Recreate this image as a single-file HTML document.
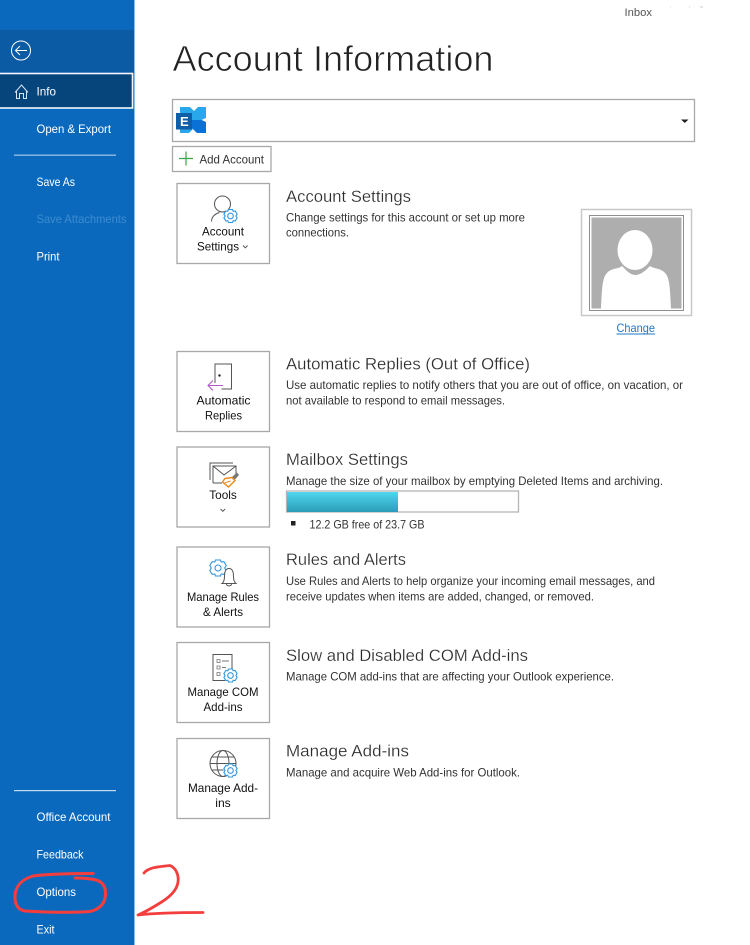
<!DOCTYPE html>
<html><head><meta charset="utf-8"><title>Account Information</title>
<style>
html,body{margin:0;padding:0;background:#fff;width:750px;height:945px;overflow:hidden}
svg{display:block;filter:blur(.35px)}
text{font-family:"Liberation Sans",sans-serif;fill:#333;font-size:12px}
.n text{fill:#fff;font-size:12px}
.h{font-size:17px;fill:#2b2b2b;stroke:#fff;stroke-width:.22px}
.b{fill:#111;font-size:12px;text-anchor:middle}
.box{fill:#fff;stroke:#a8a8a8;stroke-width:1.3}
.ic{fill:none;stroke:#555;stroke-width:1}
.g{fill:none;stroke:#2f97dc;stroke-width:1.1}
</style></head><body>
<svg width="750" height="945" viewBox="0 0 750 945" xmlns="http://www.w3.org/2000/svg">
<defs><linearGradient id="bar" x1="0" y1="0" x2="0" y2="1"><stop offset="0" stop-color="#4fd6ee"/><stop offset="1" stop-color="#2b9cb8"/></linearGradient></defs>
<!-- sidebar -->
<rect width="134" height="945" fill="#0b69bd"/>
<rect x="134" width="1" height="945" fill="#8fbce4"/>
<rect y="30" width="134" height="43" fill="#0a5aa4"/>
<circle cx="21" cy="50.500" r="9.500" fill="none" stroke="#fff" stroke-width="1"/>
<path d="M27 50.500H15.500M20 46l-4.500 4.500L20 55" fill="none" stroke="#fff" stroke-width="1"/>
<rect x="-2" y="73.500" width="134.500" height="34.500" fill="#05457c" stroke="#f4f8fc" stroke-width="1.600"/>
<path d="M15 92.500L21.500 85L28 92.500M16.500 91V98.500H19.500V93.500H23.500V98.500H26.500V91" fill="none" stroke="#d8e6f2" stroke-width="1"/>
<rect x="14" y="154.500" width="102" height="1.400" fill="#8fbce4"/>
<rect x="14" y="790" width="102" height="1.200" fill="#c4dcf1"/>
<g class="n">
<text x="36.500" y="95.500" textLength="19.500" lengthAdjust="spacingAndGlyphs">Info</text>
<text x="36.500" y="133" textLength="74.500" lengthAdjust="spacingAndGlyphs">Open &amp; Export</text>
<text x="36.500" y="186" textLength="38.500" lengthAdjust="spacingAndGlyphs">Save As</text>
<text x="36.500" y="223" textLength="90" lengthAdjust="spacingAndGlyphs" style="fill:#3d8ccf">Save Attachments</text>
<text x="36.500" y="260.500" textLength="23" lengthAdjust="spacingAndGlyphs">Print</text>
<text x="36.500" y="821" textLength="74" lengthAdjust="spacingAndGlyphs">Office Account</text>
<text x="36.500" y="858.500" textLength="47" lengthAdjust="spacingAndGlyphs">Feedback</text>
<text x="36.500" y="896" textLength="39.500" lengthAdjust="spacingAndGlyphs">Options</text>
<text x="36.500" y="933.500" textLength="18" lengthAdjust="spacingAndGlyphs">Exit</text>
</g>
<!-- red annotation -->
<path d="M93 873.500C70 873.500 48 874 33 876C20 880 15 888 15 897C15 906 19 910 25 911C50 912.500 75 912.500 90 911.500C100 909 105 903 105.500 895C106 887 103 882 96 880C90 878.500 82 878 75 878" fill="none" stroke="#f43d3d" stroke-width="3" stroke-linecap="round" stroke-linejoin="round"/>
<path d="M144 873C148 868 155 867 170 865.500C176 868 179 875 178 882C177 890 170 897 160 903C152 908 145 912 138 915C155 913 185 912.500 203 912.500" fill="none" stroke="#f43d3d" stroke-width="2.800" stroke-linecap="round" stroke-linejoin="round"/>
<!-- top -->
<text x="624.500" y="16" textLength="27.500" lengthAdjust="spacingAndGlyphs" style="font-size:11px;fill:#555">Inbox</text>
<rect x="670" y="6.500" width="1" height="1" fill="#ddd"/><rect x="689" y="6.500" width="1" height="1" fill="#ccc"/><rect x="700" y="6.500" width="3" height="1" fill="#ccc"/>
<text x="172.500" y="71" textLength="321" lengthAdjust="spacingAndGlyphs" style="font-size:36px;fill:#222;stroke:#fff;stroke-width:.75px">Account Information</text>
<!-- account select -->
<rect x="172.500" y="99.500" width="522" height="42" class="box"/>
<path d="M681 119.500h7.500l-3.750 3.500z" fill="#222"/>
<path d="M180 107H190L194 111L198 107H206V118L201.500 120L206 122V133H197L193 129L189 133H180Z" fill="#28a8ea"/>
<path d="M192 120H201.500L206 122V133H197L192 128Z" fill="#0a72d6"/>
<rect x="176" y="113" width="16" height="16.500" fill="#0f5ea8"/>
<text x="180" y="126" style="font-size:13px;font-weight:bold;fill:#fff">E</text>
<!-- add account -->
<rect x="172.500" y="146.500" width="98.500" height="25" class="box"/>
<path d="M186 151.500v14M179 158.500h14" stroke="#34a84a" stroke-width="1.200" fill="none"/>
<text x="199.500" y="163.500" textLength="64.500" lengthAdjust="spacingAndGlyphs" style="font-size:12px">Add Account</text>
<!-- Buttons -->
<rect x="177" y="183.500" width="92.500" height="80" class="box"/>
<rect x="177" y="351.500" width="92.500" height="80" class="box"/>
<rect x="177" y="447" width="92.500" height="80" class="box"/>
<rect x="177" y="547" width="92.500" height="80" class="box"/>
<rect x="177" y="642.500" width="92.500" height="80" class="box"/>
<rect x="177" y="738.500" width="92.500" height="80" class="box"/>
<!-- account settings icon -->
<circle cx="222.500" cy="204" r="8" class="ic"/>
<path d="M211.500 221.500c0-5 4-8 8-9" class="ic"/>
<g id="gear1"><circle cx="230.500" cy="216" r="7" fill="#fff"/><circle cx="230.500" cy="216" r="2.800" class="g"/><path d="M228.500 209.500h4l.7 1.800 2-.3 1.900 3.200-1.200 1.800 1.200 1.800-1.900 3.200-2-.3-.7 1.800h-4l-.7-1.800-2 .3-1.900-3.200 1.200-1.800-1.200-1.800 1.900-3.200 2 .3z" class="g"/></g>
<text class="b" x="223" y="235.500" textLength="42" lengthAdjust="spacingAndGlyphs">Account</text>
<text class="b" x="218" y="250.500" textLength="42" lengthAdjust="spacingAndGlyphs">Settings</text>
<path d="M243 245.500l2.300 2.300 2.300-2.300" class="ic"/>
<!-- auto replies icon -->
<path d="M215 383v-19h16.500v25h-10" class="ic"/>
<circle cx="219.500" cy="375.500" r="1.200" fill="#222"/>
<path d="M223 385.500h-15M213 380.500l-5 5 5 5" fill="none" stroke="#b15cc6" stroke-width="1.100"/>
<text class="b" x="223.500" y="404.500" textLength="54" lengthAdjust="spacingAndGlyphs">Automatic</text>
<text class="b" x="223.500" y="419.500" textLength="37" lengthAdjust="spacingAndGlyphs">Replies</text>
<!-- tools icon -->
<path d="M210 480v-17h23" class="ic"/>
<path d="M213 483v-17h23v9M213 483h9M213 466l11 9 12-9" class="ic"/>
<path d="M232 477l5-4.500 2 2.500-4 4.500z" fill="#777"/>
<path d="M225 478.500l7-1 3 3-6.500 6.500-6-5z" fill="#fff" stroke="#ec8a1e" stroke-width="1.400"/>
<path d="M224.500 483l6-2" stroke="#ec8a1e" stroke-width="1"/>
<text class="b" x="223" y="499" textLength="27.500" lengthAdjust="spacingAndGlyphs">Tools</text>
<path d="M220.500 509l2.300 2.300 2.300-2.300" class="ic"/>
<!-- rules icon -->
<circle cx="218" cy="568" r="3" class="g"/>
<path d="M215.500 560h5l.7 2 2.600-.4 2.400 3.900-1.500 2.500 1.500 2.500-2.400 3.900-2.600-.4-.7 2h-5l-.7-2-2.600.4-2.400-3.900 1.500-2.500-1.500-2.500 2.400-3.900 2.600.4z" class="g"/>
<path d="M222 583.500c2-1.500 2.500-3.500 2.500-7 0-5 1.500-8 4.500-8s4.500 3 4.500 8c0 3.500 .5 5.500 2.500 7zM226.500 584c0 2.500 5 2.500 5 0" fill="#fff" stroke="#555" stroke-width="1"/>
<text class="b" x="223" y="601" textLength="72" lengthAdjust="spacingAndGlyphs">Manage Rules</text>
<text class="b" x="223" y="616" textLength="40" lengthAdjust="spacingAndGlyphs">&amp; Alerts</text>
<!-- COM icon -->
<path d="M232 669v-14.500h-19v26h12" class="ic"/>
<path d="M217 659.500h3v3h-3zM217 666h3v3h-3zM217 672.500h3v3h-3z" fill="none" stroke="#777" stroke-width=".8"/>
<path d="M222 661h7M222 667.500h4" stroke="#777" stroke-width=".9"/>
<use href="#gear1" x="0" y="459.500"/>
<text class="b" x="223" y="696" textLength="71" lengthAdjust="spacingAndGlyphs">Manage COM</text>
<text class="b" x="223" y="711" textLength="39" lengthAdjust="spacingAndGlyphs">Add-ins</text>
<!-- add-ins icon -->
<circle cx="223" cy="763.500" r="13" class="ic"/>
<ellipse cx="223" cy="763.500" rx="6" ry="13" class="ic"/>
<path d="M210 763.500h26M212 757h22M212 770h12" class="ic"/>
<use href="#gear1" x="0" y="554.500"/>
<text class="b" x="223" y="792" textLength="70" lengthAdjust="spacingAndGlyphs">Manage Add-</text>
<text class="b" x="223" y="807" textLength="15.500" lengthAdjust="spacingAndGlyphs">ins</text>
<!-- headings & descriptions -->
<text class="h" x="286" y="202" textLength="125" lengthAdjust="spacingAndGlyphs">Account Settings</text>
<text x="286" y="221.500" textLength="239" lengthAdjust="spacingAndGlyphs">Change settings for this account or set up more</text>
<text x="286" y="236.500" textLength="63" lengthAdjust="spacingAndGlyphs">connections.</text>
<text class="h" x="286" y="369.500" textLength="244" lengthAdjust="spacingAndGlyphs">Automatic Replies (Out of Office)</text>
<text x="286" y="389" textLength="397" lengthAdjust="spacingAndGlyphs">Use automatic replies to notify others that you are out of office, on vacation, or</text>
<text x="286" y="404.500" textLength="219" lengthAdjust="spacingAndGlyphs">not available to respond to email messages.</text>
<text class="h" x="286" y="465" textLength="122" lengthAdjust="spacingAndGlyphs">Mailbox Settings</text>
<text x="286" y="485" textLength="377" lengthAdjust="spacingAndGlyphs">Manage the size of your mailbox by emptying Deleted Items and archiving.</text>
<rect x="286.500" y="491" width="232" height="21" fill="#fff" stroke="#b5b5b5" stroke-width="1.300"/>
<rect x="287" y="492" width="111" height="20" fill="url(#bar)"/>
<rect x="291" y="521" width="4.500" height="4.500" fill="#222"/>
<text x="309.500" y="528.500" textLength="115" lengthAdjust="spacingAndGlyphs">12.2 GB free of 23.7 GB</text>
<text class="h" x="286" y="565" textLength="120" lengthAdjust="spacingAndGlyphs">Rules and Alerts</text>
<text x="286" y="585" textLength="369" lengthAdjust="spacingAndGlyphs">Use Rules and Alerts to help organize your incoming email messages, and</text>
<text x="286" y="600.500" textLength="308" lengthAdjust="spacingAndGlyphs">receive updates when items are added, changed, or removed.</text>
<text class="h" x="286" y="661" textLength="242" lengthAdjust="spacingAndGlyphs">Slow and Disabled COM Add-ins</text>
<text x="286" y="680.500" textLength="328" lengthAdjust="spacingAndGlyphs">Manage COM add-ins that are affecting your Outlook experience.</text>
<text class="h" x="286" y="756.500" textLength="123" lengthAdjust="spacingAndGlyphs">Manage Add-ins</text>
<text x="286" y="776.500" textLength="234" lengthAdjust="spacingAndGlyphs">Manage and acquire Web Add-ins for Outlook.</text>
<!-- photo -->
<rect x="581.500" y="209.500" width="110" height="106" fill="#fff" stroke="#c8c8c8" stroke-width="1.500"/>
<rect x="589.500" y="215.500" width="94" height="95" fill="#fff" stroke="#8f8f8f" stroke-width="1"/>
<rect x="591.500" y="217.500" width="90" height="91" fill="#aeaeae"/>
<path d="M601 308.500C602 290 602 278 607 273C611 268 619 269 622 266C626 270 630 275 635.500 275C641 275 646 270 650 266C654 269 661 268 665 273C670 278 670 290 671 308.500Z" fill="#fff"/>
<ellipse cx="635" cy="250" rx="17.500" ry="20" fill="#fff"/>
<text x="616.500" y="332" textLength="38.500" lengthAdjust="spacingAndGlyphs" style="fill:#1f78c8">Change</text>
<rect x="616.500" y="333.500" width="38.500" height="1" fill="#1f78c8"/>
</svg>
</body></html>
